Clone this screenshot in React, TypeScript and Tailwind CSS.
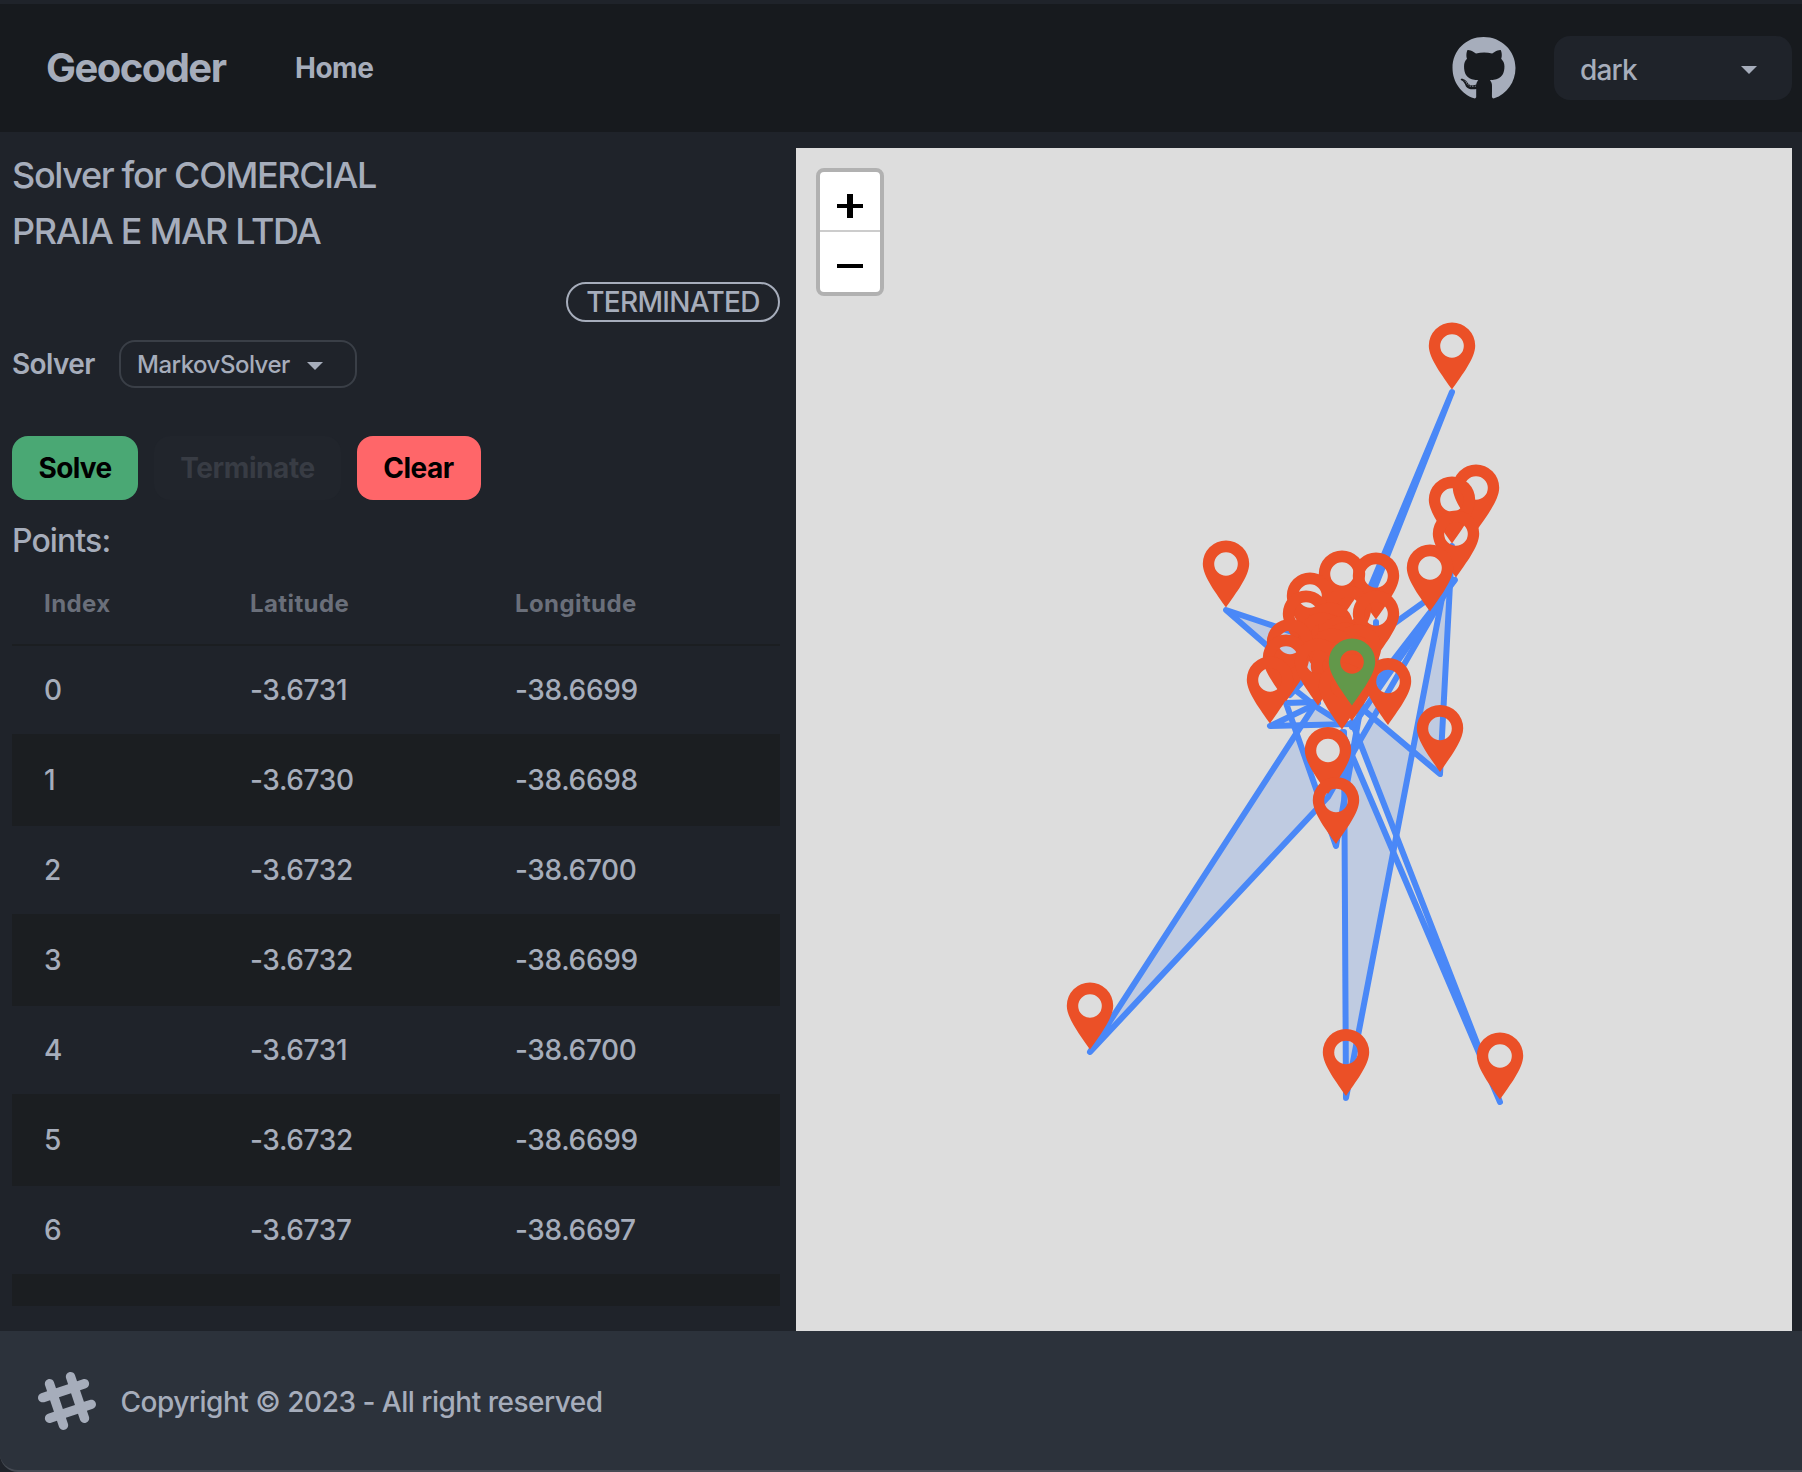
import React from "react";
import { FaGithub } from "react-icons/fa";

type Point = [number, number];

const rows = [
  ["0", "-3.6731", "-38.6699"],
  ["1", "-3.6730", "-38.6698"],
  ["2", "-3.6732", "-38.6700"],
  ["3", "-3.6732", "-38.6699"],
  ["4", "-3.6731", "-38.6700"],
  ["5", "-3.6732", "-38.6699"],
  ["6", "-3.6737", "-38.6697"],
];

const markers: Point[] = [
  [1452, 392], [1476, 534], [1452, 546], [1456, 580], [1226, 610], [1430, 614],
  [1342, 620], [1376, 622], [1310, 642], [1348, 655], [1376, 660], [1306, 660],
  [1330, 672], [1322, 682], [1340, 686], [1290, 688.5], [1345, 692], [1358, 694],
  [1332, 698], [1334, 712], [1286, 704], [1318, 708], [1352, 723.5], [1270, 726],
  [1388, 727.5], [1342, 732], [1440, 774.5], [1328, 796.5], [1336, 846.5],
  [1090, 1052], [1346, 1098.5], [1500, 1102],
];

const routes: Point[][] = [
  [[1342, 655], [1452, 392], [1354, 640]],
  [[1310, 638], [1226, 610], [1318, 690]],
  [[1318, 703], [1270, 726], [1352, 724]],
  [[1318, 702], [1286, 703], [1336, 846], [1362, 700]],
  [[1290, 686], [1318, 708], [1340, 722]],
  [[1290, 695], [1304, 680]],
  [[1318, 700], [1090, 1052], [1328, 797], [1362, 737], [1453, 580]],
  [[1344, 732], [1346, 1098], [1452, 546], [1440, 774], [1352, 700]],
  [[1342, 732], [1500, 1102], [1352, 722]],
  [[1350, 655], [1455, 580], [1351, 715]],
  [[1352, 727], [1454, 580]],
  [[1342, 620], [1342, 640]],
  [[1376, 622], [1376, 660]],
];

const areas: Point[][] = [
  [[1226, 610], [1310, 638], [1318, 690]],
  [[1090, 1052], [1296, 735], [1321, 804]],
  [[1321, 804], [1328, 797], [1350, 760], [1336, 846]],
  [[1346, 1098], [1344, 800], [1352, 752], [1393, 852]],
  [[1361, 740], [1375, 716], [1413, 750], [1397, 835]],
  [[1452, 546], [1413, 750], [1440, 774]],
  [[1298, 724], [1316, 706], [1340, 716], [1342, 724]],
  [[1278, 722], [1292, 712], [1296, 723]],
  [[1364, 708], [1376, 716], [1384, 698]],
];

const toPoints = (pts: Point[]) => pts.map((p) => p.join(",")).join(" ");

function Marker({ at, color }: { at: Point; color: string }) {
  return (
    <path
      transform={`translate(${at[0]} ${at[1] - 2.5})`}
      fill={color}
      fillRule="evenodd"
      d="M0 0C-9 -13.2-23.2 -31-23.2 -43.8A23.2 23.2 0 0 1 23.2 -43.8C23.2 -31 9 -13.2 0 0ZM0 -55.3A11.8 11.8 0 1 0 0 -31.7A11.8 11.8 0 1 0 0 -55.3Z"
    />
  );
}

function Caret() {
  return (
    <svg width="16" height="8" viewBox="0 0 16 8" fill="currentColor">
      <path d="M0 0H16L8 8Z" />
    </svg>
  );
}

function Header() {
  return (
    <header className="flex h-32 shrink-0 items-center bg-[#171a1e] pr-[10px] pl-[46px]">
      <div className="w-[249px] text-[40px] leading-none font-bold tracking-[-1.55px]">Geocoder</div>
      <nav className="text-[28px] leading-none font-bold tracking-[-0.5px]">Home</nav>
      <div className="ml-auto flex items-center gap-[38px]">
        <FaGithub className="h-[65px] w-16" />
        <div className="flex h-16 w-[238px] items-center justify-between rounded-2xl bg-[#1f232a] pr-[35px] pl-[26px]">
          <span className="pt-1 text-[28px] leading-none font-[450] tracking-[-0.8px]">dark</span>
          <span className="pt-1">
            <Caret />
          </span>
        </div>
      </div>
    </header>
  );
}

function SolverPanel() {
  return (
    <section className="flex h-full w-[780px] flex-col pl-3 font-[450]">
      <h1 className="mt-[15px] w-[420px] text-[36px] leading-[56px] tracking-[-1.35px]">
        Solver for COMERCIAL
        <br />
        PRAIA E MAR LTDA
      </h1>
      <div className="mt-[23px] flex h-10 w-[214px] items-center justify-center self-end rounded-full border-2 border-[#a6adbb] text-[28px] leading-none tracking-[-0.7px]">
        TERMINATED
      </div>
      <div className="mt-[18px] flex h-12 items-center">
        <span className="w-[107px] text-[28px] leading-none font-semibold tracking-[-0.6px]">Solver</span>
        <div className="flex h-12 w-[238px] items-center gap-[17px] rounded-2xl border-2 border-[#3a3f47] pl-4">
          <span className="w-[153px] pt-[2px] text-[24px] leading-none tracking-[-0.5px]">MarkovSolver</span>
          <span className="pt-1">
            <Caret />
          </span>
        </div>
      </div>
      <div className="mt-12 flex h-16 gap-4 text-[28px] font-bold">
        <button className="w-[126px] rounded-2xl bg-[#4aa874] tracking-[-0.7px] text-black">Solve</button>
        <button className="w-[187px] rounded-2xl bg-[#21252c] tracking-[-0.4px] text-[#383c44]">Terminate</button>
        <button className="w-[124px] rounded-2xl bg-[#ff6669] pr-px tracking-[-0.5px] text-black">Clear</button>
      </div>
      <div className="mt-4 h-[46px] text-[32px] leading-[50px] tracking-[-0.9px]">Points:</div>
      <div className="h-[744px] w-[768px] overflow-hidden">
        <div className="flex h-[84px] items-center border-b-2 border-[#1b1e21] pt-[2px] pl-8 text-[24px] font-bold tracking-[0.4px] text-[#6a6f7a]">
          <span className="w-[206px]">Index</span>
          <span className="w-[265px]">Latitude</span>
          <span>Longitude</span>
        </div>
        {rows.map((r) => (
          <div
            key={r[0]}
            className="flex h-[90px] items-center border-b-2 border-[#1b1e21] pl-8 text-[28px] tracking-[-0.35px] even:bg-[#1f232a] odd:bg-[#1b1e21]"
          >
            <span className="w-[206px]">{r[0]}</span>
            <span className="w-[265px]">{r[1]}</span>
            <span>{r[2]}</span>
          </div>
        ))}
        <div className="h-8 bg-[#1b1e21]" />
      </div>
    </section>
  );
}

function MapView() {
  return (
    <section className="relative mt-4 ml-4 h-[1183px] w-[996px] bg-[#ddd]">
      <svg className="block h-full w-full" viewBox="796 148 996 1183">
        <g fill="#4a88f7" fillOpacity="0.2">
          {areas.map((a, i) => (
            <polygon key={i} points={toPoints(a)} />
          ))}
        </g>
        <g fill="none" stroke="#4a88f7" strokeWidth="6" strokeLinecap="round" strokeLinejoin="round">
          {routes.map((r, i) => (
            <polyline key={i} points={toPoints(r)} />
          ))}
        </g>
        {markers.map((m, i) => (
          <Marker key={i} at={m} color="#eb5027" />
        ))}
        <Marker at={[1352, 708]} color="#62984a" />
      </svg>
      <div className="absolute top-5 left-5 flex h-32 w-[68px] flex-col overflow-hidden rounded-lg border-4 border-[#b1b1b1] bg-white">
        <button aria-label="Zoom in" className="flex h-[60px] shrink-0 items-center justify-center border-b-2 border-[#ccc]">
          <svg width="26" height="24" viewBox="0 0 26 24" className="mt-[10px]">
            <path d="M0 10H10V0H16V10H26V14H16V24H10V14H0Z" />
          </svg>
        </button>
        <button aria-label="Zoom out" className="flex h-[60px] items-center justify-center">
          <span className="mt-[8px] h-1 w-[26px] bg-black" />
        </button>
      </div>
    </section>
  );
}

function Footer() {
  return (
    <footer className="flex h-[141px] shrink-0 items-center gap-[25px] rounded-bl-[18px] border-b-2 border-[#454a53] bg-[#2c323b] pl-[37.5px]">
      <svg width="58" height="58" viewBox="0 0 24 24" fill="currentColor" fillRule="evenodd">
        <path d="M22.672 15.226l-2.432.811.841 2.515c.33 1.019-.209 2.127-1.23 2.456-1.15.325-2.148-.321-2.463-1.226l-.84-2.518-5.013 1.677.84 2.517c.391 1.203-.434 2.542-1.831 2.542-.88 0-1.601-.564-1.86-1.314l-.842-2.516-2.431.809c-1.135.328-2.145-.317-2.463-1.229-.329-1.018.211-2.127 1.231-2.456l2.432-.809-1.621-4.823-2.432.808c-1.355.384-2.558-.59-2.558-1.839 0-.817.509-1.582 1.327-1.846l2.433-.809-.842-2.515c-.33-1.02.211-2.129 1.232-2.458 1.02-.329 2.13.209 2.461 1.229l.842 2.515 5.011-1.677-.839-2.517c-.403-1.238.484-2.553 1.843-2.553.819 0 1.585.509 1.85 1.326l.841 2.517 2.431-.81c1.02-.33 2.131.211 2.461 1.229.332 1.018-.21 2.126-1.23 2.456l-2.433.809 1.622 4.823 2.433-.809c1.242-.401 2.557.484 2.557 1.838 0 .819-.51 1.583-1.328 1.847m-8.992-6.428l-5.01 1.675 1.619 4.828 5.011-1.674-1.62-4.829z" />
      </svg>
      <p className="pt-[3px] text-[28px] leading-none font-[450] tracking-[-0.5px]">Copyright © 2023 - All right reserved</p>
    </footer>
  );
}

export default function App() {
  return (
    <div className="flex h-[1472px] w-[1802px] flex-col overflow-hidden bg-[#1f232a] pt-1 font-['Inter',sans-serif] text-[#a6adbb]">
      <Header />
      <main className="flex h-[1199px] shrink-0">
        <SolverPanel />
        <MapView />
      </main>
      <Footer />
    </div>
  );
}
